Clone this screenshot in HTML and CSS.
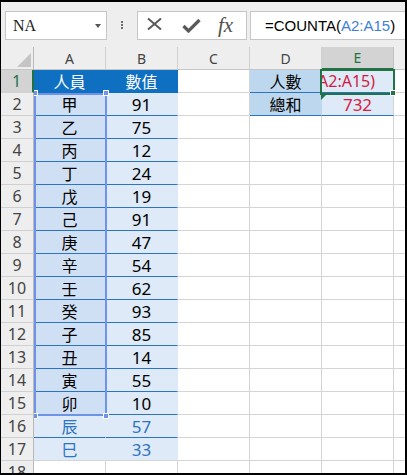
FILE: index.html
```html
<!DOCTYPE html>
<html>
<head>
  <meta charset="utf-8">
  <title>COUNTA</title>
  <link rel="stylesheet" href="styles.css">
</head>
<body>
  <div class="window">
    <!-- Formula bar -->
    <div class="toolbar">
      <div class="namebox"><span>NA</span><i class="caret"></i></div>
      <div class="grip"><i></i><i></i><i></i></div>
      <div class="fbar">
        <svg class="ico-x" width="15" height="12" viewBox="0 0 15 12"><path d="M1 0.5 L14 11.5 M14 0.5 L1 11.5" stroke="#5a5a5a" stroke-width="2" fill="none"/></svg>
        <svg class="ico-ok" width="19" height="15" viewBox="0 0 19 15"><path d="M1.5 8 L6.5 13 L17.5 2" stroke="#5a5a5a" stroke-width="3.2" fill="none"/></svg>
        <span class="fx">fx</span>
      </div>
      <div class="finput">=COUNTA(<span class="ref">A2:A15</span>)</div>
    </div>

    <!-- Sheet -->
    <div class="sheet">
      <div class="corner"></div><div class="hd">A</div><div class="hd">B</div><div class="hd">C</div><div class="hd">D</div><div class="hd on">E</div><div class="hd"></div>

      <div class="rn on">1</div><div class="th">人員</div><div class="th">數值</div><div></div><div class="lb">人數</div><div class="vl edit"><span>=COUNTA(A2:A15)</span></div><div></div>
      <div class="rn">2</div><div class="tb sel">甲</div><div class="tb n">91</div><div></div><div class="lb">總和</div><div class="vl n red">732</div><div></div>
      <div class="rn">3</div><div class="tb sel">乙</div><div class="tb n">75</div><div></div><div></div><div></div><div></div>
      <div class="rn">4</div><div class="tb sel">丙</div><div class="tb n">12</div><div></div><div></div><div></div><div></div>
      <div class="rn">5</div><div class="tb sel">丁</div><div class="tb n">24</div><div></div><div></div><div></div><div></div>
      <div class="rn">6</div><div class="tb sel">戊</div><div class="tb n">19</div><div></div><div></div><div></div><div></div>
      <div class="rn">7</div><div class="tb sel">己</div><div class="tb n">91</div><div></div><div></div><div></div><div></div>
      <div class="rn">8</div><div class="tb sel">庚</div><div class="tb n">47</div><div></div><div></div><div></div><div></div>
      <div class="rn">9</div><div class="tb sel">辛</div><div class="tb n">54</div><div></div><div></div><div></div><div></div>
      <div class="rn">10</div><div class="tb sel">壬</div><div class="tb n">62</div><div></div><div></div><div></div><div></div>
      <div class="rn">11</div><div class="tb sel">癸</div><div class="tb n">93</div><div></div><div></div><div></div><div></div>
      <div class="rn">12</div><div class="tb sel">子</div><div class="tb n">85</div><div></div><div></div><div></div><div></div>
      <div class="rn">13</div><div class="tb sel">丑</div><div class="tb n">14</div><div></div><div></div><div></div><div></div>
      <div class="rn">14</div><div class="tb sel">寅</div><div class="tb n">55</div><div></div><div></div><div></div><div></div>
      <div class="rn">15</div><div class="tb sel">卯</div><div class="tb n">10</div><div></div><div></div><div></div><div></div>
      <div class="rn">16</div><div class="tb blue">辰</div><div class="tb n blue">57</div><div></div><div></div><div></div><div></div>
      <div class="rn">17</div><div class="tb blue end">巳</div><div class="tb n blue end">33</div><div></div><div></div><div></div><div></div>
      <div class="rn">18</div><div></div><div></div><div></div><div></div><div></div><div></div>

      <!-- referenced range A2:A15 -->
      <div class="range">
        <i class="hdl tl"></i><i class="hdl tr"></i><i class="hdl bl"></i><i class="hdl br"></i>
      </div>
      <!-- active cell E1 -->
      <div class="cursor"><i></i></div>
      <div class="flag"></div>
    </div>
  </div>
</body>
</html>
```

FILE: styles.css
```css
body {
  margin: 0;
  font-family: "Noto Sans", "Noto Sans CJK TC", sans-serif;
  color: #000;
}

.window {
  width: 407px;
  height: 475px;
  box-sizing: border-box;
  border: 2px solid #000;
  border-left-width: 1px;
  overflow: hidden;
  background: #fff;
}

/* Formula bar */
.toolbar {
  height: 45px;
  box-sizing: border-box;
  padding: 9px 0 0 4px;
  background: #eeeeee;
  display: flex;
  align-items: flex-start;
  overflow: hidden;
}

.namebox {
  flex: none;
  width: 102px;
  height: 29px;
  box-sizing: border-box;
  border: 1px solid #c6c6c6;
  background: #fff;
  display: flex;
  align-items: center;
  padding-left: 7px;
  font-family: "Liberation Serif", serif;
  font-size: 16px;
  color: #222;
}

.namebox span {
  flex: 1;
}

.caret {
  width: 0;
  height: 0;
  border-left: 3px solid transparent;
  border-right: 3px solid transparent;
  border-top: 4px solid #555;
  margin-right: 5px;
}

.grip {
  flex: none;
  margin: 10px 0 0 14px;
  display: flex;
  flex-direction: column;
  gap: 1px;
}

.grip i {
  display: block;
  width: 2px;
  height: 2px;
  background: #6f6f6f;
}

.fbar {
  flex: none;
  margin-left: 14px;
  width: 110px;
  height: 29px;
  box-sizing: border-box;
  border: 1px solid #c6c6c6;
  background: #fff;
  display: flex;
  align-items: center;
}

.ico-x {
  margin-left: 9px;
  margin-top: -3px;
}

.ico-ok {
  margin-left: 20px;
}

.fx {
  margin-left: 17px;
  font-family: "Liberation Serif", serif;
  font-style: italic;
  font-size: 21px;
  color: #505050;
  line-height: 1;
}

.finput {
  flex: none;
  margin-left: 3px;
  width: 170px;
  height: 29px;
  box-sizing: border-box;
  border: 1px solid #c6c6c6;
  border-right: none;
  background: #fff;
  padding-left: 14px;
  display: flex;
  align-items: center;
  white-space: nowrap;
  font-family: "Liberation Sans", sans-serif;
  font-size: 15px;
}

.finput .ref {
  color: #3d7fd9;
}

/* Sheet grid */
.sheet {
  position: relative;
  display: grid;
  grid-template-columns: 33px repeat(6, 72px);
  grid-auto-rows: 23px;
}

.sheet > div {
  box-sizing: border-box;
  border-right: 1px solid #d4d4d4;
  border-bottom: 1px solid #d4d4d4;
  display: flex;
  align-items: center;
  justify-content: center;
  font-size: 16px;
  white-space: nowrap;
}

.sheet > .corner {
  background: #eeeeee;
  border-right-color: #b9b9b9;
  border-bottom-color: #c6c6c6;
  position: relative;
}

.corner::after {
  content: "";
  position: absolute;
  right: 2px;
  bottom: 2px;
  width: 0;
  height: 0;
  border-left: 14px solid transparent;
  border-bottom: 14px solid #c4c4c4;
}

.sheet > .hd {
  background: #eeeeee;
  color: #444;
  font-size: 14px;
  border-right-color: #d0d0d0;
  border-bottom-color: #c6c6c6;
}

.sheet > .hd.on {
  background: #d3d3d3;
  color: #217346;
  border-bottom: 2px solid #217346;
  border-right-color: #c0c0c0;
}

.sheet > .rn {
  background: #eeeeee;
  color: #444;
  border-right-color: #b9b9b9;
  border-bottom-color: #d0d0d0;
}

.sheet > .rn.on {
  background: #d3d3d3;
  color: #217346;
  border-right: 2px solid #217346;
}

/* table A1:B17 */
.sheet > .th {
  background: #0f70c1;
  color: #fff;
  border-color: #0f70c1;
}

.sheet > .tb {
  background: #deeaf7;
  border-right-color: #deeaf7;
  border-bottom-color: #2c73c2;
}

.sheet > .tb.sel {
  background: #d0e0f4;
  border-right-color: #d0e0f4;
}

.sheet > .tb.end {
  border-bottom-color: #d4d4d4;
}

.sheet > .n {
  font-size: 17px;
}

.sheet > .blue {
  color: #2e74c0;
}

/* D1:E2 */
.sheet > .lb {
  background: #bdd7ee;
  border-right-color: #bdd7ee;
  border-bottom-color: #2c73c2;
}

.sheet > .vl {
  background: #deeaf7;
  border-bottom-color: #2c73c2;
}

.sheet > .red {
  color: #d6213f;
}

.sheet > .edit {
  overflow: hidden;
  justify-content: flex-end;
  padding-right: 18px;
  color: #d11a44;
}

/* overlays */
.sheet > .range {
  position: absolute;
  left: 33px;
  top: 46px;
  width: 73px;
  height: 323px;
  box-sizing: border-box;
  border: 2px solid #6f93e6;
}

.hdl {
  position: absolute;
  width: 6px;
  height: 6px;
  box-sizing: border-box;
  background: #6f93e6;
  border: 1px solid #fff;
}

.hdl.tr { left: 67px; top: -5px; }
.hdl.br { left: 67px; bottom: -5px; }
.hdl.tl { left: -2px; top: -5px; width: 4px; border-left: none; }
.hdl.bl { left: -2px; bottom: -5px; width: 4px; border-left: none; }

.sheet > .cursor {
  position: absolute;
  left: 319px;
  top: 22px;
  width: 75px;
  height: 26px;
  box-sizing: border-box;
  border: 2px solid #217346;
}

.cursor i {
  position: absolute;
  right: -3px;
  bottom: -3px;
  width: 6px;
  height: 6px;
  box-sizing: border-box;
  background: #217346;
  border: 1px solid #fff;
}

.sheet > .flag {
  position: absolute;
  left: 320px;
  top: 48px;
  width: 0;
  height: 0;
  border: none;
  border-top: 5px solid #217346;
  border-right: 5px solid transparent;
}
```
